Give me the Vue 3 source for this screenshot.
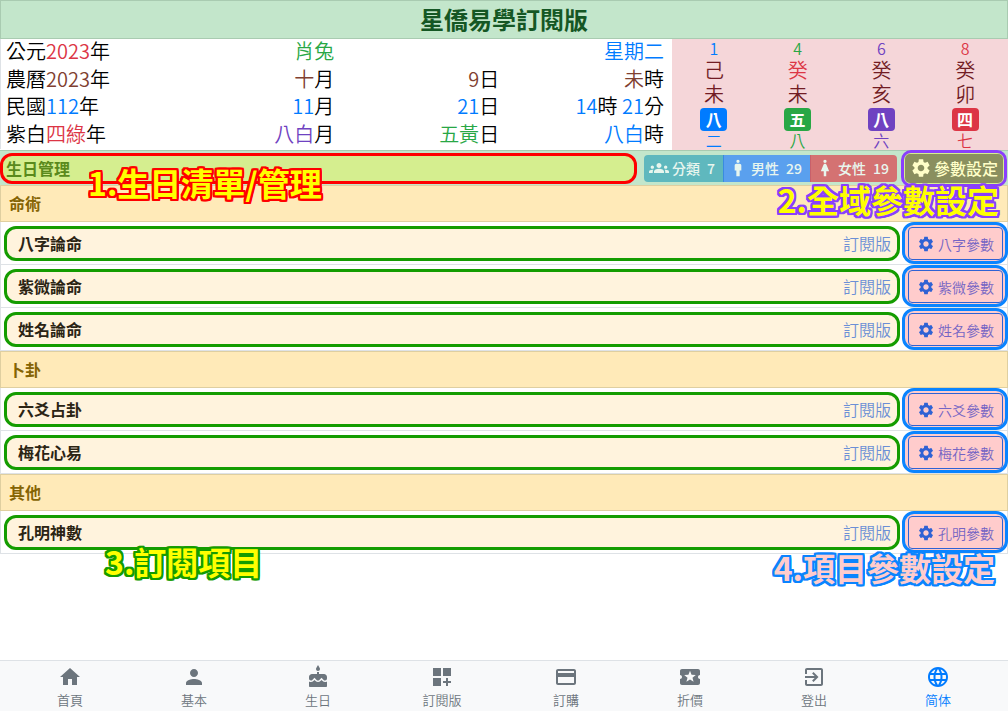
<script setup>
const icons = {
  groups: 'M12 12.75c1.63 0 3.07.39 4.24.9 1.08.48 1.76 1.56 1.76 2.73V18H6v-1.61c0-1.18.68-2.26 1.76-2.73 1.17-.52 2.61-.91 4.24-.91zM4 13c1.1 0 2-.9 2-2s-.9-2-2-2-2 .9-2 2 .9 2 2 2zm1.13 1.1c-.37-.06-.74-.1-1.13-.1-.99 0-1.93.21-2.78.58C.48 14.9 0 15.62 0 16.43V18h4.5v-1.61c0-.83.23-1.61.63-2.29zM20 13c1.1 0 2-.9 2-2s-.9-2-2-2-2 .9-2 2 .9 2 2 2zm4 3.43c0-.81-.48-1.53-1.22-1.85-.85-.37-1.79-.58-2.78-.58-.39 0-.76.04-1.13.1.4.68.63 1.46.63 2.29V18H24v-1.57zM12 6c1.66 0 3 1.34 3 3s-1.34 3-3 3-3-1.34-3-3 1.34-3 3-3z',
  man: 'M14 7h-4c-1.1 0-2 .9-2 2v6h2v7h4v-7h2V9c0-1.1-.9-2-2-2zM12 2a2 2 0 1 0 0 4a2 2 0 1 0 0-4z',
  woman: 'M13.94 8.31C13.62 7.52 12.85 7 12 7s-1.62.52-1.94 1.31L7 16h3.5v6h3v-6H17l-3.06-7.69zM12 2a2 2 0 1 0 0 4a2 2 0 1 0 0-4z',
  gear: 'M19.14 12.94c.04-.3.06-.61.06-.94 0-.32-.02-.64-.07-.94l2.03-1.58c.18-.14.23-.41.12-.61l-1.92-3.32c-.12-.22-.37-.29-.59-.22l-2.39.96c-.5-.38-1.03-.7-1.62-.94l-.36-2.54c-.04-.24-.24-.41-.48-.41h-3.84c-.24 0-.43.17-.47.41l-.36 2.54c-.59.24-1.13.57-1.62.94l-2.39-.96c-.22-.08-.47 0-.59.22L2.74 8.87c-.12.21-.08.47.12.61l2.03 1.58c-.05.3-.09.63-.09.94s.02.64.07.94l-2.03 1.58c-.18.14-.23.41-.12.61l1.92 3.32c.12.22.37.29.59.22l2.39-.96c.5.38 1.03.7 1.62.94l.36 2.54c.05.24.24.41.48.41h3.84c.24 0 .44-.17.47-.41l.36-2.54c.59-.24 1.13-.56 1.62-.94l2.39.96c.22.08.47 0 .59-.22l1.92-3.32c.12-.22.07-.47-.12-.61l-2.01-1.58zM12 15.6c-1.98 0-3.6-1.62-3.6-3.6s1.62-3.6 3.6-3.6 3.6 1.62 3.6 3.6-1.62 3.6-3.6 3.6z',
  home: 'M10 20v-6h4v6h5v-8h3L12 3 2 12h3v8z',
  person: 'M12 12c2.21 0 4-1.79 4-4s-1.79-4-4-4-4 1.79-4 4 1.79 4 4 4zm0 2c-2.67 0-8 1.34-8 4v2h16v-2c0-2.66-5.33-4-8-4z',
  cake: 'M12 6c1.11 0 2-.9 2-2 0-.38-.1-.73-.29-1.03L12 0l-1.71 2.97c-.19.3-.29.65-.29 1.03 0 1.1.9 2 2 2zm4.6 9.99l-1.07-1.07-1.08 1.07c-1.3 1.3-3.58 1.31-4.89 0l-1.07-1.07-1.09 1.07C6.75 16.64 5.88 17 4.96 17c-.73 0-1.4-.23-1.96-.61V21c0 .55.45 1 1 1h16c.55 0 1-.45 1-1v-4.61c-.56.38-1.23.61-1.96.61-.92 0-1.79-.36-2.44-1.01zM18 9h-5V7h-2v2H6c-1.66 0-3 1.34-3 3v1.54c0 1.08.88 1.96 1.96 1.96.52 0 1.02-.2 1.38-.57l2.14-2.13 2.13 2.13c.74.74 2.03.74 2.77 0l2.14-2.13 2.13 2.13c.37.37.86.57 1.38.57 1.08 0 1.96-.88 1.96-1.96V12C21 10.34 19.66 9 18 9z',
  dashboard: 'M3 11h8V3H3v8zM3 21h8v-8H3v8zM13 3v8h8V3h-8zM18 13h-2v3h-3v2h3v3h2v-3h3v-2h-3z',
  card: 'M20 4H4c-1.11 0-1.99.89-1.99 2L2 18c0 1.11.89 2 2 2h16c1.11 0 2-.89 2-2V6c0-1.11-.89-2-2-2zm0 14H4v-6h16v6zm0-10H4V6h16v2z',
  ticket: 'M20 12c0-1.1.9-2 2-2V6c0-1.1-.9-2-2-2H4c-1.1 0-1.99.9-1.99 2v4c1.1 0 1.99.9 1.99 2s-.89 2-2 2v4c0 1.1.9 2 2 2h16c1.1 0 2-.9 2-2v-4c-1.1 0-2-.9-2-2zm-4.42 4.8L12 14.5l-3.58 2.3 1.08-4.12-3.29-2.69 4.24-.25L12 5.8l1.54 3.95 4.24.25-3.29 2.69 1.09 4.11z',
  exit: 'M10.09 15.59L11.5 17l5-5-5-5-1.41 1.41L12.67 11H3v2h9.67l-2.58 2.59zM19 3H5c-1.11 0-2 .9-2 2v4h2V5h14v14H5v-4H3v4c0 1.1.89 2 2 2h14c1.1 0 2-.9 2-2V5c0-1.1-.9-2-2-2z',
  globe: 'M11.99 2C6.47 2 2 6.48 2 12s4.47 10 9.99 10C17.52 22 22 17.52 22 12S17.52 2 11.99 2zm6.93 6h-2.95c-.32-1.25-.78-2.45-1.38-3.56 1.84.63 3.37 1.91 4.33 3.56zM12 4.04c.83 1.2 1.48 2.53 1.91 3.96h-3.82c.43-1.43 1.08-2.76 1.91-3.96zM4.26 14C4.1 13.36 4 12.69 4 12s.1-1.36.26-2h3.38c-.08.66-.14 1.32-.14 2s.06 1.34.14 2H4.26zm.82 2h2.95c.32 1.25.78 2.45 1.38 3.56-1.84-.63-3.37-1.9-4.33-3.56zm2.95-8H5.08c.96-1.66 2.49-2.93 4.33-3.56C8.81 5.55 8.35 6.75 8.03 8zM12 19.96c-.83-1.2-1.48-2.53-1.91-3.96h3.82c-.43 1.43-1.08 2.76-1.91 3.96zM14.34 14H9.66c-.09-.66-.16-1.32-.16-2s.07-1.35.16-2h4.68c.09.65.16 1.32.16 2s-.07 1.34-.16 2zm.25 5.56c.6-1.11 1.06-2.31 1.38-3.56h2.95c-.96 1.65-2.49 2.93-4.33 3.56zM16.36 14c.08-.66.14-1.32.14-2s-.06-1.34-.14-2h3.38c.16.64.26 1.31.26 2s-.1 1.36-.26 2h-3.38z',
}

// Each cell is a list of [text, colour] runs.
const calendar = [
  [[['公元', 'ink'], ['2023', 'red'], ['年', 'ink']], [['肖兔', 'green']], [], [['星期二', 'blue']]],
  [[['農曆', 'ink'], ['2023', 'brown'], ['年', 'ink']], [['十', 'brown'], ['月', 'ink']], [['9', 'brown'], ['日', 'ink']], [['未', 'brown'], ['時', 'ink']]],
  [[['民國', 'ink'], ['112', 'blue'], ['年', 'ink']], [['11', 'blue'], ['月', 'ink']], [['21', 'blue'], ['日', 'ink']], [['14', 'blue'], ['時 ', 'ink'], ['21', 'blue'], ['分', 'ink']]],
  [[['紫白', 'ink'], ['四綠', 'red'], ['年', 'ink']], [['八白', 'purple'], ['月', 'ink']], [['五黃', 'green'], ['日', 'ink']], [['八白', 'blue'], ['時', 'ink']]],
]

const pillars = [
  { num: '1', stem: '己', branch: '未', star: '八', foot: '二', tone: 'blue' },
  { num: '4', stem: '癸', branch: '未', star: '五', foot: '八', tone: 'green', day: true },
  { num: '6', stem: '癸', branch: '亥', star: '八', foot: '六', tone: 'purple' },
  { num: '8', stem: '癸', branch: '卯', star: '四', foot: '七', tone: 'red' },
]

const counts = [
  { icon: 'groups', label: '分類', count: 7, tone: 'teal' },
  { icon: 'man', label: '男性', count: 29, tone: 'sky' },
  { icon: 'woman', label: '女性', count: 19, tone: 'rose' },
]

const sections = [
  { title: '命術', items: [['八字論命', '八字參數'], ['紫微論命', '紫微參數'], ['姓名論命', '姓名參數']] },
  { title: '卜卦', items: [['六爻占卦', '六爻參數'], ['梅花心易', '梅花參數']] },
  { title: '其他', items: [['孔明神數', '孔明參數']] },
]

const nav = [
  ['home', '首頁'], ['person', '基本'], ['cake', '生日'], ['dashboard', '訂閱版'],
  ['card', '訂購'], ['ticket', '折價'], ['exit', '登出'], ['globe', '简体'],
]
</script>

<template>
  <div class="page">
    <header class="title"><h1>星僑易學訂閱版</h1></header>

    <section class="today">
      <table class="calendar">
        <tbody>
          <tr v-for="(row, r) in calendar" :key="r">
            <td v-for="(cell, c) in row" :key="c"><span v-for="(run, i) in cell" :key="i" :class="run[1]">{{ run[0] }}</span></td>
          </tr>
        </tbody>
      </table>
      <div class="pillars">
        <div v-for="p in pillars" :key="p.num" class="pillar">
          <span class="num" :class="p.tone">{{ p.num }}</span>
          <span class="sign" :class="{ red: p.day }">{{ p.stem }}</span>
          <span class="sign">{{ p.branch }}</span>
          <span class="badge" :class="'bg-' + p.tone">{{ p.star }}</span>
          <span class="foot" :class="p.tone">{{ p.foot }}</span>
        </div>
      </div>
    </section>

    <main>
      <div class="bar">
        <button type="button" class="birthdays">生日管理</button>
        <div class="group">
          <button v-for="c in counts" :key="c.label" type="button" :class="c.tone">
            <svg viewBox="0 0 24 24" width="20" height="20" aria-hidden="true"><path :d="icons[c.icon]" /></svg>
            <span>{{ c.label }}</span><span class="count">{{ c.count }}</span>
          </button>
        </div>
        <div class="global-ring">
          <button type="button" class="global">
            <svg viewBox="0 0 24 24" width="22" height="22" aria-hidden="true"><path :d="icons.gear" /></svg>
            <span>參數設定</span>
          </button>
        </div>
        <strong class="note note-1">1.生日清單/管理</strong>
        <strong class="note note-2">2.全域參數設定</strong>
      </div>

      <section v-for="s in sections" :key="s.title">
        <h2>{{ s.title }}</h2>
        <div v-for="item in s.items" :key="item[0]" class="row">
          <a href="#" class="entry"><b>{{ item[0] }}</b><span>訂閱版</span></a>
          <div class="ring">
            <button type="button" class="param">
              <svg viewBox="0 0 24 24" width="18" height="18" aria-hidden="true"><path :d="icons.gear" /></svg>
              <span>{{ item[1] }}</span>
            </button>
          </div>
        </div>
      </section>
      <strong class="note note-3">3.訂閱項目</strong>
      <strong class="note note-4">4.項目參數設定</strong>
    </main>

    <nav>
      <a v-for="n in nav" :key="n[1]" href="#" :class="{ active: n[0] === 'globe' }">
        <svg viewBox="0 0 24 24" width="24" height="24" aria-hidden="true"><path :d="icons[n[0]]" /></svg>
        <span>{{ n[1] }}</span>
      </a>
    </nav>
  </div>
</template>

<style>
body { margin: 0; background: #fff; }
</style>

<style scoped>
.page {
  display: flex;
  flex-direction: column;
  min-height: 100vh;
  font-family: "Noto Sans CJK TC", "Noto Sans", sans-serif;
  font-size: 16px;
  font-weight: 350;
  color: #000;
}
.page *, .page { box-sizing: border-box; }
button { margin: 0; padding: 0; border: 0; font: inherit; cursor: pointer; }
a { text-decoration: none; }
svg { display: block; flex: none; fill: currentColor; }

.ink { color: #000; }
.red { color: #dc3545; }
.green { color: #28a745; }
.blue { color: #007bff; }
.purple { color: #6f42c1; }
.brown { color: #804030; }
.bg-red { background: #dc3545; }
.bg-green { background: #28a745; }
.bg-blue { background: #007bff; }
.bg-purple { background: #6f42c1; }

.title { padding-bottom: 2px; border: 1px solid #a9cbb1; background: #c3e6cb; }
h1 { margin: 0; font-size: 24px; line-height: 35px; font-weight: 700; text-align: center; color: #155724; }

.today { display: grid; grid-template-columns: 2fr 1fr; align-items: start; }
.calendar { width: 100%; height: 110px; border-collapse: collapse; table-layout: fixed; border-left: 1px solid #dee2e6; border-right: 8px solid #fff; font-size: 20px; line-height: 24px; white-space: pre; }
.calendar td { padding: 0 0 3px; text-align: right; }
.calendar td:first-child { padding-left: 5px; text-align: left; }
.calendar td:nth-child(3) { padding-right: 2px; }
.pillars { display: grid; grid-template-columns: repeat(4, 1fr); height: 111px; padding-right: 1px; background: #f5d6d9; }
.pillar { display: flex; flex-direction: column; align-items: center; color: #721c24; }
.num { font-size: 16px; line-height: 19px; }
.sign { font-size: 20px; line-height: 24px; }
.sign.red { color: #dc3545; }
.badge { width: 27px; margin-top: 2px; border-radius: 4px; color: #fff; font-size: 16px; line-height: 23px; font-weight: 700; text-align: center; }
.foot { font-size: 16px; line-height: 18px; }

main { position: relative; }
.bar { position: relative; z-index: 1; display: flex; align-items: center; height: 35px; border-top: 1px solid #a9cbb1; background: #c3e6cb; }
.birthdays { flex: 1; height: 31px; padding: 0 3px; border: 3px solid #f00; border-radius: 12px; background: #d5ee8f; color: #5a8a1c; font-weight: 700; line-height: 25px; text-align: left; }
.group { display: flex; margin: 0 4px 0 7px; height: 27px; border-radius: 4px; overflow: hidden; color: #e8f6ee; font-size: 14px; font-weight: 500; }
.group button { display: flex; align-items: center; gap: 3px; padding: 0 8px 0 4px; color: inherit; }
.group .count { margin-left: 4px; }
.group .teal { padding-left: 5px; background: #5fb8be; }
.group .sky { border-left: 1px solid #3a8be0; background: #5aa0ee; }
.group .rose { border-left: 1px solid #c8606a; background: #d47272; }
.global-ring { flex: none; width: 106px; height: 37px; margin: -1px 1px -1px 0; padding: 1px; border: 3px solid #8a3ffc; border-radius: 10px; background: #d5ee8f; }
.global { display: flex; align-items: center; justify-content: center; gap: 2px; width: 100%; height: 29px; border-radius: 5px; background: #8a8f5f; color: #ffffc8; font-weight: 500; }

h2 { margin: 0; padding: 0 8px; border: 1px solid #dfcfa0; background: #ffeab8; color: #856404; font-size: 16px; line-height: 35px; font-weight: 700; }
.row { display: flex; align-items: flex-start; height: 43px; padding-left: 3px; border: solid #dee2e6; border-width: 0 1px 1px; }
.entry { display: flex; flex: 1; align-items: center; justify-content: space-between; height: 35px; margin: 4px 2px 0 0; padding: 0 6px 2px 11px; border: 3px solid #149c00; border-radius: 12px; background: #fff3dd; color: #6b8fd6; }
.entry b { color: #2b2414; font-weight: 700; }
.ring { flex: none; width: 106px; height: 42px; margin-right: -1px; padding: 2px 2px 2px 3px; border: 3px solid #0a84ff; border-radius: 12px; background: #ffcccc; }
.param { display: flex; align-items: center; justify-content: center; gap: 3px; width: 100%; height: 33px; border: 1px solid #2f62d4; border-radius: 4px; background: transparent; color: #7464c4; font-size: 14px; }
.param svg { color: #2f62d4; }

.note {
  position: absolute;
  font-size: 32px;
  line-height: 36px;
  font-weight: 700;
  white-space: nowrap;
  color: #ff0;
  text-shadow:
    2px 0 var(--edge), -2px 0 var(--edge), 0 2px var(--edge), 0 -2px var(--edge),
    2px 2px var(--edge), -2px 2px var(--edge), 2px -2px var(--edge), -2px -2px var(--edge),
    2px 1px var(--edge), -2px 1px var(--edge), 2px -1px var(--edge), -2px -1px var(--edge),
    1px 2px var(--edge), -1px 2px var(--edge), 1px -2px var(--edge), -1px -2px var(--edge);
  pointer-events: none;
}
.note-1 { left: 88px; top: 13px; --edge: #f00; }
.note-2 { right: 9px; top: 30px; --edge: #8a3ffc; }
.note-3 { left: 105px; top: 393px; --edge: #149c00; }
.note-4 { right: 13px; top: 399px; --edge: #0a84ff; color: #ffcccc; }

nav { display: grid; grid-template-columns: repeat(8, 1fr); height: 51px; margin-top: auto; padding: 4px 8px 0; border-top: 1px solid #dee2e6; background: #f8f9fa; }
nav a { display: flex; flex-direction: column; align-items: center; color: #6c757d; font-size: 13px; line-height: 22px; }
nav a.active { color: #007bff; }
</style>
